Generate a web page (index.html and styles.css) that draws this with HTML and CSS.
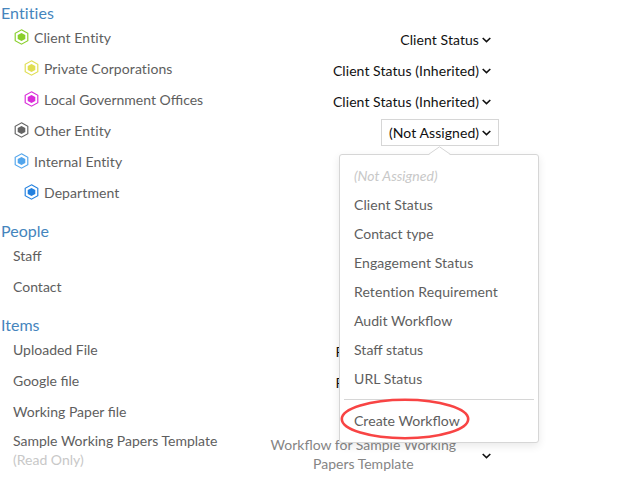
FILE: index.html
```html
<!DOCTYPE html>
<html lang="en">
<head>
<meta charset="utf-8">
<title>Workflows</title>
<link rel="stylesheet" href="styles.css">
</head>
<body>
<svg width="0" height="0" class="defs">
  <symbol id="hex" viewBox="0 0 14 16"><path d="M7 .8 13.3 4.3v7.4L7 15.2.7 11.7V4.3Z" fill="none" stroke="currentColor" stroke-width="1.15"/><path d="M7 3.9 10.8 6v4L7 12.1 3.2 10V6Z" fill="currentColor"/></symbol>
  <symbol id="chev" viewBox="0 0 9 6"><path d="M.7 1 4.5 4.6 8.3 1" fill="none" stroke="currentColor" stroke-width="1.6"/></symbol>
</svg>
<main class="page">
  <section>
    <h2 class="loose">Entities</h2>
    <div class="row"><div class="name"><svg class="hex green"><use href="#hex"/></svg><span class="loose">Client Entity</span></div><div class="select"><span class="label">Client Status</span><svg class="chev"><use href="#chev"/></svg></div></div>
    <div class="row child"><div class="name"><svg class="hex yellow"><use href="#hex"/></svg><span class="loose">Private Corporations</span></div><div class="select"><span class="label">Client Status (Inherited)</span><svg class="chev"><use href="#chev"/></svg></div></div>
    <div class="row child"><div class="name"><svg class="hex magenta"><use href="#hex"/></svg>Local Government Offices</div><div class="select"><span class="label">Client Status (Inherited)</span><svg class="chev"><use href="#chev"/></svg></div></div>
    <div class="row"><div class="name"><svg class="hex gray"><use href="#hex"/></svg><span class="loose">Other Entity</span></div>
      <div class="select open"><span class="label">(Not Assigned)</span><svg class="chev"><use href="#chev"/></svg>
        <div class="menu">
          <svg class="arrow" viewBox="0 0 26 10"><path d="M1 9.5 12.5 1 24 9.5V10H1Z" fill="#fff"/><path d="M1 8.8 12.5.8 24 8.8" fill="none" stroke="#d6d6d6"/></svg>
          <div class="item none">(Not Assigned)</div>
          <div class="item loose">Client Status</div>
          <div class="item">Contact type</div>
          <div class="item loose">Engagement Status</div>
          <div class="item loose">Retention Requirement</div>
          <div class="item wider">Audit Workflow</div>
          <div class="item wider">Staff status</div>
          <div class="item loose">URL Status</div>
          <div class="divider"></div>
          <div class="item wider">Create Workflow</div>
          <svg class="ring" viewBox="0 0 130 42"><ellipse cx="65" cy="21" rx="63.2" ry="19.2" fill="none" stroke="#f84444" stroke-width="2.6"/></svg>
        </div>
      </div>
    </div>
    <div class="row"><div class="name"><svg class="hex sky"><use href="#hex"/></svg><span class="loose">Internal Entity</span></div></div>
    <div class="row child"><div class="name"><svg class="hex blue"><use href="#hex"/></svg><span class="loose">Department</span></div></div>
  </section>
  <section>
    <h2>People</h2>
    <div class="row"><div class="name">Staff</div></div>
    <div class="row"><div class="name">Contact</div></div>
  </section>
  <section>
    <h2>Items</h2>
    <div class="row"><div class="name">Uploaded File</div><div class="select"><span class="label">Retention Requirement</span><svg class="chev"><use href="#chev"/></svg></div></div>
    <div class="row"><div class="name">Google file</div><div class="select"><span class="label">Retention Requirement</span><svg class="chev"><use href="#chev"/></svg></div></div>
    <div class="row"><div class="name">Working Paper file</div></div>
    <div class="row tall"><div class="name">Sample Working Papers Template<br><span class="muted">(Read Only)</span></div><div class="select wide"><span class="wrap">Workflow for Sample Working<br>Papers Template</span><svg class="chev"><use href="#chev"/></svg></div></div>
  </section>
</main>
</body>
</html>
```

FILE: styles.css
```css
* { box-sizing: border-box; }
body {
  margin: 0;
  height: 478px;
  overflow: hidden;
  background: #fff;
  color: #5e5e5e;
  font: 14px/19px Lato, sans-serif;
}
.defs { position: absolute; }
.page { padding: 3px 0 0 1px; width: 499px; }
section { margin-bottom: 13px; }
h2 {
  margin: 0 0 -1px;
  font-size: 16px;
  line-height: 20px;
  font-weight: 400;
  color: #4585bd;
}
.row {
  display: flex;
  align-items: center;
  justify-content: space-between;
  height: 31px;
  padding-left: 12px;
}
.child { padding-left: 22px; }
.name { display: flex; align-items: center; }
.loose { letter-spacing: .09px; }
.wider { font-size: 14.1px; }
.label { letter-spacing: .07px; }
.hex { width: 15px; height: 16px; margin: 0 5px 0 1px; position: relative; top: -1px; }
.green { color: #89cf2b; }
.yellow { color: #e0de52; }
.magenta { color: #d92bd9; }
.gray { color: #646464; }
.sky { color: #52a5ec; }
.blue { color: #2380df; }
.select {
  position: relative;
  display: flex;
  align-items: center;
  height: 27px;
  margin-top: 4px;
  padding: 0 7px;
  border: 1px solid transparent;
  color: #111;
  white-space: nowrap;
}
.open { width: 118px; border-color: #d6d6d6; }
.chev { width: 9px; height: 6px; margin-left: auto; flex: none; }
.label + .chev { margin-left: 3px; }
.open .label + .chev { margin-left: auto; }
.tall { height: 45px; }
.tall .name { display: block; }
.muted { color: #c8c8c8; }
.wide { height: 38px; margin-top: 9px; color: #858585; }
.wide .chev { margin: 3px 0 0 26px; color: #111; }
.wrap { text-align: center; }
.menu {
  position: absolute;
  z-index: 2;
  top: 34px;
  left: -43px;
  width: 200px;
  height: 289px;
  padding: 6px 4px 0;
  border: 1px solid #d6d6d6;
  border-radius: 3px;
  background: #fff;
  box-shadow: 0 3px 9px rgba(0, 0, 0, .09);
  color: #5e5e5e;
}
.item { height: 29px; padding-left: 10px; line-height: 29px; }
.none { color: #c8c8c8; font-style: italic; }
.divider { height: 1px; margin: 6px 0; background: #d6d6d6; }
.arrow { position: absolute; top: -9px; left: 87px; width: 26px; height: 10px; }
.ring { position: absolute; left: 0; top: 243px; width: 130px; height: 42px; }
```
